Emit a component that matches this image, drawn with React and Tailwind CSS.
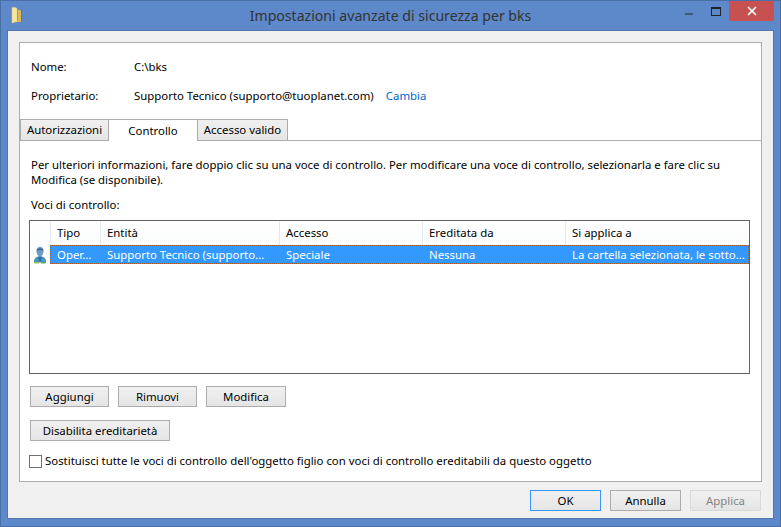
import { X } from "lucide-react";

const font = { fontFamily: '"Noto Sans", sans-serif' };

const columns = [
  { label: "Tipo", cell: "Oper...", width: "w-[50px]" },
  { label: "Entità", cell: "Supporto Tecnico (supporto...", width: "w-[179px]" },
  { label: "Accesso", cell: "Speciale", width: "w-[143px]" },
  { label: "Ereditata da", cell: "Nessuna", width: "w-[143px]" },
  { label: "Si applica a", cell: "La cartella selezionata, le sotto...", width: "w-[184px]" },
];

function FolderIcon() {
  return (
    <svg width="14" height="17" viewBox="0 0 14 17">
      <path d="M6 3h5v12H6z" fill="#4a6a9a" opacity="0.6" />
      <path d="M5 3h4.500l.5 1v11H5z" fill="#d8b95e" />
      <path d="M1 0.500h3.500l1.500 1v13l-5 1.500z" fill="#f6e6a4" stroke="#e6cc72" strokeWidth="0.5" />
      <path d="M6 3h1v11H6z" fill="#b89a48" />
    </svg>
  );
}

function UserIcon() {
  return (
    <svg width="14" height="18" viewBox="0 0 14 18">
      <path d="M1 15.500c0-3.500 2-5 6-5s6 1.500 6 5v1H1z" fill="#4a93c4" />
      <path d="M5 10.500h4l-1.500 5.500h-1z" fill="#2f6c9c" />
      <ellipse cx="7" cy="5.500" rx="3.500" ry="4.800" fill="#6d9cc8" />
      <path d="M3.500 5C3.500 1.500 10.500 1 10.500 5 8 3.500 6 3.500 3.500 5z" fill="#3d5f88" />
      <path d="M1 16h5v1.500H1.500z" fill="#8cc63f" />
      <path d="M8 16h5l-.5 1.500H8z" fill="#5fae5a" />
    </svg>
  );
}

function Button({ children, className, focused, disabled }) {
  const borderColor = focused
    ? "border-[#3399ff]"
    : disabled
      ? "border-[#d9d9d9]"
      : "border-[#acacac]";
  return (
    <button
      className={`flex h-[21px] items-center justify-center border bg-gradient-to-b from-[#f0f0f0] to-[#e5e5e5] ${borderColor} ${disabled ? "text-[#838383]" : "text-black"} ${className}`}
    >
      {children}
    </button>
  );
}

function Tab({ children, active, className }) {
  if (active) {
    return (
      <div className={`z-10 flex h-[22px] shrink-0 items-center justify-center border-t border-[#acacac] bg-white ${className}`}>
        {children}
      </div>
    );
  }
  return (
    <div className={`flex h-[22px] shrink-0 items-center justify-center border border-[#acacac] bg-gradient-to-b from-[#f0f0f0] to-[#e5e5e5] ${className}`}>
      {children}
    </div>
  );
}

export default function App() {
  return (
    <div
      style={font}
      className="flex h-[527px] w-[781px] flex-col overflow-hidden border border-[#4a6ea6] bg-[#5d88c9] px-[6px] pb-[7px] text-[11.4px] leading-none text-black"
    >
      {/* Title bar */}
      <div className="relative flex h-[29px] shrink-0 items-center justify-center">
        <div className="absolute left-[4px] top-[6px]">
          <FolderIcon />
        </div>
        <span className="pt-[1px] text-[14.1px] text-[#333]">Impostazioni avanzate di sicurezza per bks</span>
        <div className="absolute right-[81px] top-[12px] h-[2px] w-[8px] bg-[#44597a]" />
        <div className="absolute right-[53px] top-[6px] h-[9px] w-[10px] border border-t-2 border-[#222]" />
        <div className="absolute right-0 top-0 flex h-[20px] w-[45px] items-center justify-center bg-[#c75050]">
          <X size={14} strokeWidth={3} color="#fff" />
        </div>
      </div>

      {/* Client area */}
      <div className="flex min-h-0 flex-1 flex-col border border-[#4f76ae] bg-[#f0f0f0] px-[11px] pb-[6px] pt-[11px]">
        <div className="flex h-[440px] shrink-0 flex-col border border-[#adadad] bg-white">
          <div className="flex h-[76px] shrink-0 flex-col gap-[15px] pl-[11px] pt-[17px]">
            <div className="flex h-[14px] items-center">
              <span className="w-[103px]">Nome:</span>
              <span>C:\bks</span>
            </div>
            <div className="flex h-[14px] items-center">
              <span className="w-[103px]">Proprietario:</span>
              <span>Supporto Tecnico (supporto@tuoplanet.com)</span>
              <span className="ml-[12px] text-[#0066cc]">Cambia</span>
            </div>
          </div>

          {/* Tabs */}
          <div className="flex h-[22px] shrink-0 items-start border-b border-[#acacac]">
            <Tab className="w-[89px]">Autorizzazioni</Tab>
            <Tab active className="w-[88px]">Controllo</Tab>
            <Tab className="w-[91px]">Accesso valido</Tab>
          </div>

          <div className="flex min-h-0 flex-1 flex-col px-[9px] pt-[16px]">
            <p className="pl-[2px] leading-[15px]">
              Per ulteriori informazioni, fare doppio clic su una voce di controllo. Per modificare una voce di controllo, selezionarla e fare clic su Modifica (se disponibile).
            </p>
            <p className="mt-[10px] pl-[2px] leading-[15px]">Voci di controllo:</p>

            {/* Entries */}
            <div className="mt-[8px] h-[154px] w-[721px] shrink-0 border border-[#646464] bg-white">
              <div className="flex h-[24px] bg-gradient-to-b from-white to-[#fbfcfd] pl-[20px]">
                {columns.map((col) => (
                  <div key={col.label} className={`flex shrink-0 items-center border-l border-[#e3e8f1] pl-[6px] ${col.width}`}>
                    {col.label}
                  </div>
                ))}
              </div>
              <div className="flex h-[19px]">
                <div className="flex w-[20px] shrink-0 items-center justify-center">
                  <UserIcon />
                </div>
                <div className="flex min-w-0 flex-1 overflow-hidden border border-dotted border-[#a0582a] bg-[#3399ff] text-white">
                  {columns.map((col) => (
                    <div key={col.label} className={`flex shrink-0 items-center whitespace-nowrap pl-[6px] ${col.width}`}>
                      {col.cell}
                    </div>
                  ))}
                </div>
              </div>
            </div>

            <div className="ml-[1px] mt-[12px] flex gap-[9px]">
              <Button className="w-[79px]">Aggiungi</Button>
              <Button className="w-[79px]">Rimuovi</Button>
              <Button className="w-[80px]">Modifica</Button>
            </div>
            <Button className="ml-[1px] mt-[13px] w-[140px]">Disabilita ereditarietà</Button>
            <label className="mt-[14px] flex items-center gap-[3px]">
              <span className="h-[13px] w-[13px] shrink-0 border border-[#707070] bg-white" />
              <span className="pb-[2px]">Sostituisci tutte le voci di controllo dell'oggetto figlio con voci di controllo ereditabili da questo oggetto</span>
            </label>
          </div>
        </div>

        <div className="mt-[8px] flex justify-end gap-[9px] pr-[1px]">
          <Button focused className="w-[71px]">OK</Button>
          <Button className="w-[71px]">Annulla</Button>
          <Button disabled className="w-[71px]">Applica</Button>
        </div>
      </div>
    </div>
  );
}
